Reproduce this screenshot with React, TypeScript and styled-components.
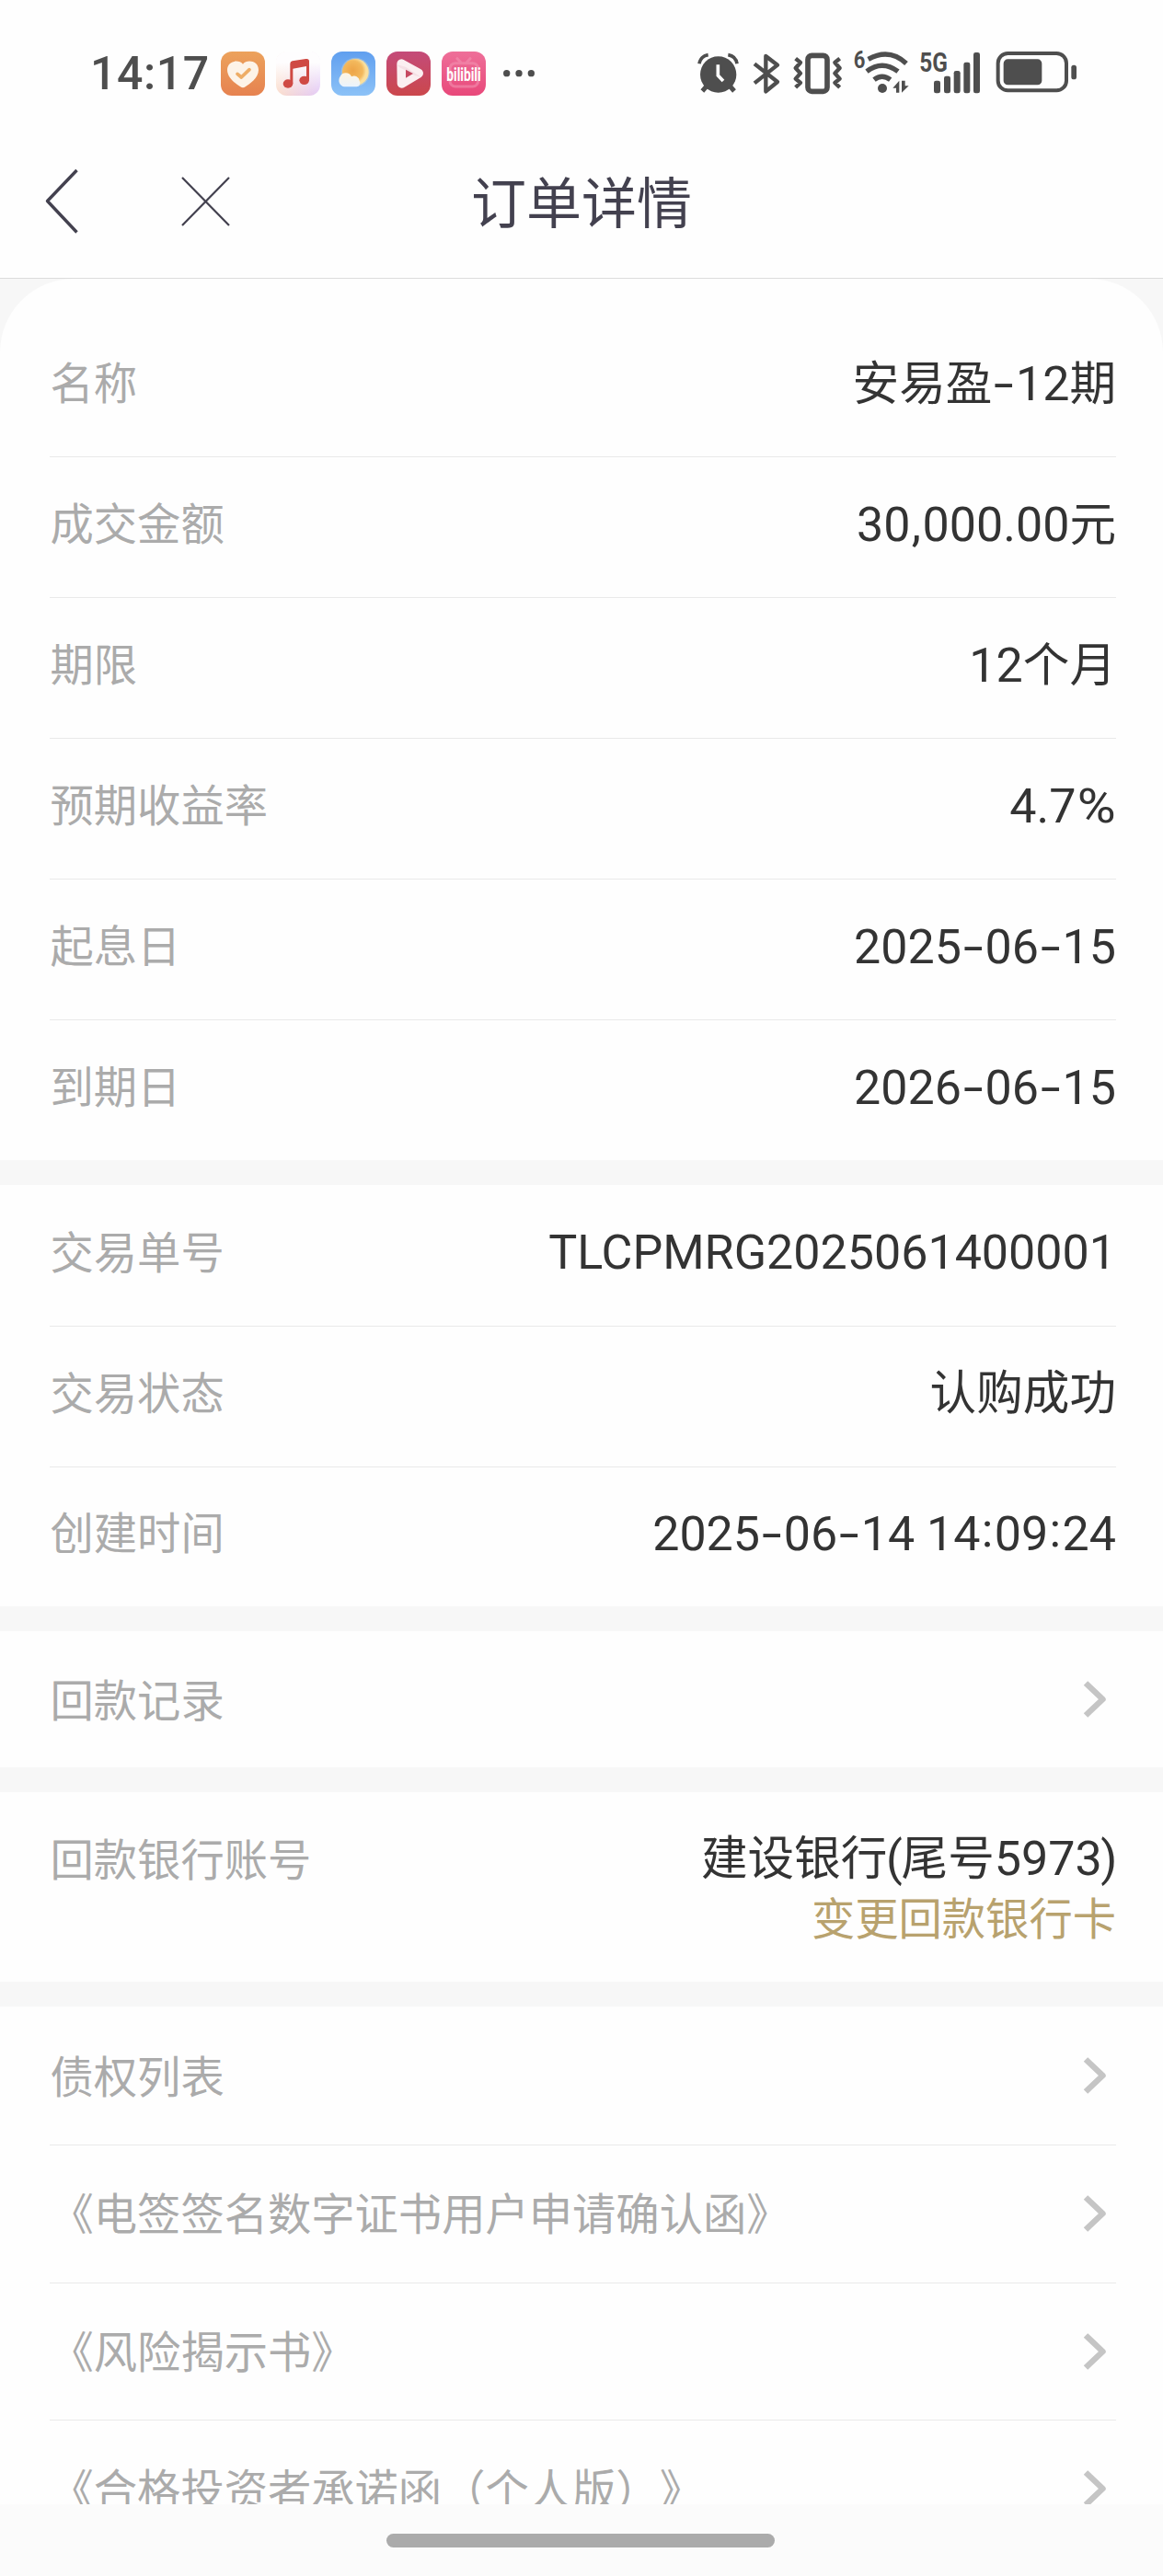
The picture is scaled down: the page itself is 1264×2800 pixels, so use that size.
import React from 'react';
import styled, { createGlobalStyle } from 'styled-components';

const INK = '#4e4e4e';
const cjk = '"Noto Sans CJK SC", "Noto Sans", sans-serif';

const GlobalStyle = createGlobalStyle`
  * { box-sizing: border-box; }
  body { margin: 0; background: #fefefe; font-family: ${cjk}; text-spacing-trim: space-all; }
  svg { display: block; overflow: visible; }
`;

const Screen = styled.div`
  width: 1264px;
  height: 2800px;
  display: flex;
  flex-direction: column;
  overflow: hidden;
  background: #f7f7f7;
`;

/* ---------- status bar ---------- */

const StatusBar = styled.div`
  flex: none;
  height: 136px;
  padding: 24px 92px 0 98px;
  display: flex;
  align-items: center;
  background: #fefefe;
`;

const Clock = styled.span`
  width: 142px;
  font: 500 50px/56px Roboto, sans-serif;
  letter-spacing: 0.6px;
  color: ${INK};
`;

const AppIcons = styled.div`
  display: flex;
  gap: 12px;
  flex: 1;
`;

const Glyph = styled.svg<{ $gap?: number }>`
  flex: none;
  height: 48px;
  margin-left: ${(p) => p.$gap ?? 0}px;
`;

const AppTile = ({ children }: { children: React.ReactNode }) => (
  <Glyph width="48" viewBox="0 0 144 144">{children}</Glyph>
);

function NotificationIcons() {
  return (
    <AppIcons>
      <AppTile>
        <defs>
          <linearGradient id="orange" x1="0" y1="0" x2="0" y2="1">
            <stop offset="0" stopColor="#eca25c" /><stop offset="1" stopColor="#e68250" />
          </linearGradient>
        </defs>
        <rect width="144" height="144" rx="36" fill="url(#orange)" />
        <path d="M72 41C60 25 21 29 21 60C21 87 51 106 64 115Q72 121 80 115C93 106 123 87 123 60C123 29 84 25 72 41Z" fill="#fdf3e8" />
        <path d="M54 73L67 84L93 59" fill="none" stroke="#eead66" strokeWidth="11" strokeLinecap="round" strokeLinejoin="round" />
      </AppTile>
      <AppTile>
        <defs>
          <linearGradient id="musicBase" x1="0" y1="0" x2="1" y2="0">
            <stop offset="0" stopColor="#fbdcc9" /><stop offset="1" stopColor="#e2c8f6" />
          </linearGradient>
          <linearGradient id="musicFade" x1="0" y1="0" x2="0" y2="1">
            <stop offset=".25" stopColor="#fefdfe" /><stop offset="1" stopColor="#fefdfe" stopOpacity="0" />
          </linearGradient>
        </defs>
        <rect width="144" height="144" rx="36" fill="url(#musicBase)" />
        <rect x="-1" y="-1" width="146" height="146" rx="36" fill="url(#musicFade)" />
        <path d="M46 40Q46 33 53 31L97 24Q108 22 108 32V92H99V48L55 56V105H46Z" fill="#cf4a44" />
        <ellipse cx="39" cy="105" rx="16" ry="14" fill="#cf4a44" />
        <ellipse cx="92" cy="94" rx="16" ry="14" fill="#cf4a44" />
      </AppTile>
      <AppTile>
        <defs>
          <linearGradient id="sky" x1="0" y1="0" x2="0" y2="1">
            <stop offset="0" stopColor="#609fef" /><stop offset="1" stopColor="#8cc2f7" />
          </linearGradient>
          <radialGradient id="sun" cx=".4" cy=".45">
            <stop offset="0" stopColor="#eda447" /><stop offset=".75" stopColor="#f3b95d" /><stop offset="1" stopColor="#fbdf9c" />
          </radialGradient>
          <linearGradient id="cloud" x1="0" y1="0" x2="0" y2="1">
            <stop offset="0" stopColor="#fff5e2" /><stop offset="1" stopColor="#eaf3fd" />
          </linearGradient>
        </defs>
        <rect width="144" height="144" rx="36" fill="url(#sky)" />
        <circle cx="79" cy="67" r="47" fill="#fbe9b8" opacity=".3" />
        <circle cx="79" cy="67" r="43" fill="url(#sun)" />
        <path d="M43 115A21 21 0 0 1 29 82A20 20 0 0 1 66 82A17 17 0 0 1 92 96A12 12 0 0 1 82 115Z" fill="url(#cloud)" />
      </AppTile>
      <AppTile>
        <defs>
          <linearGradient id="crimson" x1="0" y1="0" x2="0" y2="1">
            <stop offset="0" stopColor="#c44b79" /><stop offset="1" stopColor="#cb474c" />
          </linearGradient>
        </defs>
        <rect width="144" height="144" rx="36" fill="url(#crimson)" />
        <path d="M49 40L105 71L50 104Z" fill="none" stroke="#fbeff1" strokeWidth="30" strokeLinejoin="round" />
        <path d="M34 43Q42 54 60 60L92 78L114 84L62 50Z" fill="#f0d3da" opacity=".55" />
        <path d="M63 59L87 72L63 86Z" fill="#c64a62" />
      </AppTile>
      <AppTile>
        <defs>
          <linearGradient id="pink" x1="0" y1="0" x2="0" y2="1">
            <stop offset="0" stopColor="#ee6f99" /><stop offset="1" stopColor="#e8487a" />
          </linearGradient>
        </defs>
        <rect width="144" height="144" rx="36" fill="url(#pink)" />
        <g fill="none" stroke="#f391b1" strokeWidth="9" strokeLinecap="round" opacity=".6">
          <rect x="27" y="38" width="92" height="76" rx="18" />
          <path d="M51 23L62 35M93 23L82 35" />
        </g>
        <text x="16" y="95" textLength="112" lengthAdjust="spacingAndGlyphs" fontFamily="Roboto, sans-serif" fontWeight="700" fontSize="60" fill="#fff">bilibili</text>
      </AppTile>
      <Glyph width="36" $gap={7} viewBox="0 0 108 144">
        <g fill={INK}><circle cx="11" cy="71" r="11" /><circle cx="51" cy="71" r="11" /><circle cx="91" cy="71" r="11" /></g>
      </Glyph>
    </AppIcons>
  );
}

function SystemIcons() {
  return (
    <>
      <Glyph width="46" viewBox="54 48 138 144">
        <circle cx="122" cy="123" r="59" fill={INK} />
        <path d="M60 88Q64 63 89 59M183 88Q179 63 154 59" fill="none" stroke={INK} strokeWidth="11" />
        <path d="M83 162L70 177M161 162L174 177" stroke={INK} strokeWidth="15" />
        <path d="M121 91V126L138 144" fill="none" stroke="#fefefe" strokeWidth="11" />
      </Glyph>
      <Glyph width="32" $gap={13} viewBox="231 48 96 144">
        <path d="M240 88L315 147L277 178V63L315 92L240 151" fill="none" stroke={INK} strokeWidth="13" strokeLinejoin="round" />
      </Glyph>
      <Glyph width="55" $gap={12} viewBox="363 48 165 144">
        <rect x="414" y="61" width="63" height="117" rx="13" fill="none" stroke={INK} strokeWidth="17" />
        <path d="M374 71L390 84L374 102L390 119L374 137L390 150L374 165M518 71L502 84L518 102L502 119L518 137L502 150L518 165" fill="none" stroke={INK} strokeWidth="13" strokeLinejoin="round" />
      </Glyph>
      <Glyph width="64" $gap={10} viewBox="558 48 192 144">
        <text x="563" y="103" fontFamily="Roboto, sans-serif" fontWeight="700" fontSize="78" textLength="38" lengthAdjust="spacingAndGlyphs" fill={INK}>6</text>
        <path d="M611 73Q680 35 735 87M606 113Q656 74 708 113M630 140Q656 119 683 140" fill="none" stroke={INK} strokeWidth="16" />
        <circle cx="657" cy="168" r="15" fill={INK} />
        <path d="M712 182V143L691 167H702V182ZM720 143V182L743 160H731V143Z" fill={INK} />
      </Glyph>
      <Glyph width="70" $gap={8} viewBox="54 48 210 144">
        <text x="58" y="114" fontFamily="Roboto, sans-serif" fontWeight="700" fontSize="87" textLength="92" lengthAdjust="spacingAndGlyphs" fill={INK}>5G</text>
        <g fill={INK}>
          <rect x="105" y="143" width="21" height="41" rx="7" />
          <rect x="138" y="128" width="21" height="56" rx="7" />
          <rect x="170" y="111" width="21" height="73" rx="7" />
          <rect x="202" y="83" width="21" height="101" rx="7" />
          <rect x="234" y="51" width="21" height="133" rx="7" />
        </g>
      </Glyph>
      <Glyph width="91" $gap={13} viewBox="303 48 273 144">
        <rect x="314" y="54" width="223" height="121" rx="32" fill="none" stroke={INK} strokeWidth="12" />
        <rect x="332" y="73" width="125" height="84" rx="14" fill={INK} />
        <rect x="553" y="92" width="17" height="47" rx="8" fill={INK} />
      </Glyph>
    </>
  );
}

/* ---------- header ---------- */

const Header = styled.header`
  flex: none;
  height: 167px;
  padding: 0 51px 0 50px;
  display: grid;
  grid-template-columns: 147px 148px 1fr 294px;
  align-items: center;
  background: #fefefe;
  border-bottom: 1px solid #dcdcdc;
`;

const Title = styled.h1`
  margin: 0 0 5px;
  text-align: center;
  font: 400 60px/80px ${cjk};
  color: #43414f;
`;

/* ---------- sections ---------- */

const Content = styled.main`
  flex: 1;
  min-height: 0;
  overflow: hidden;
  display: flex;
  flex-direction: column;
  gap: 27px;
`;

const Section = styled.section<{ $first?: boolean }>`
  flex: none;
  background: #fefefe;
  padding: ${(p) => (p.$first ? 40 : 0)}px 51px 0 54px;
  border-radius: ${(p) => (p.$first ? '80px 80px 0 0' : '0')};
`;

const Row = styled.div<{ $height: number; $raise: number }>`
  height: ${(p) => p.$height}px;
  padding: 0 0 ${(p) => p.$raise}px 0.5px;
  display: flex;
  align-items: center;
  justify-content: space-between;
  & + & { box-shadow: inset 0 1px 0 #e9e9e9; }
`;

const BankRow = styled.div`
  height: 206px;
  padding: 38px 0 0 0.5px;
  display: flex;
  justify-content: space-between;
`;

const BankInfo = styled.div`
  display: flex;
  flex-direction: column;
  align-items: flex-end;
  gap: 3px;
`;

const Label = styled.span`
  font-size: 47.3px;
  line-height: 65px;
  color: #ababab;
  white-space: nowrap;
`;

const Value = styled.span`
  margin-top: -2px;
  font-size: 50.6px;
  line-height: 64px;
  color: #333;
  white-space: nowrap;
`;

const Latin = styled.span`
  font-family: Roboto, sans-serif;
  font-size: 52px;
  line-height: 1;
  white-space: pre;
`;

const Punct = styled.span<{ $w: number; $stretch?: number; $lift?: number }>`
  display: inline-flex;
  justify-content: center;
  width: ${(p) => p.$w}px;
  transform: translateY(${(p) => -(p.$lift ?? 0)}px) scaleX(${(p) => p.$stretch ?? 1});
`;

const CardLink = styled.a`
  font-size: 47.3px;
  line-height: 64px;
  color: #b8a26e;
`;

const ChevronIcon = styled.svg`
  margin-top: 4px;
`;

const Chevron = () => (
  <ChevronIcon width="36" height="44" viewBox="0 0 36 44">
    <path d="M3 4.500L21.500 22L3 39.500" fill="none" stroke="#c5c5c5" strokeWidth="6.500" strokeLinejoin="round" />
  </ChevronIcon>
);

const PUNCT: Record<string, { w: number; stretch?: number; lift?: number }> = {
  '-': { w: 25.6, stretch: 1.5, lift: 0 },
  ',': { w: 13.2 },
  ':': { w: 15.3, lift: 4 },
  '%': { w: 43.5, stretch: 1.1 },
  '(': { w: 15.3 },
  ')': { w: 15.3 },
};

/** Sets digits and Latin letters in their own face beside the Chinese text. */
function MixedText({ text }: { text: string }) {
  return (
    <>
      {text.split(/([\x20-\x7e]+)/).filter(Boolean).map((run, i) =>
        /^[\x20-\x7e]/.test(run) ? (
          <Latin key={i}>
            {run.split(/([-,:%()])/).map((part, j) => {
              const p = PUNCT[part];
              return p ? <Punct key={j} $w={p.w} $stretch={p.stretch} $lift={p.lift}>{part}</Punct> : part;
            })}
          </Latin>
        ) : (
          run
        ),
      )}
    </>
  );
}

const HomeBar = styled.footer`
  flex: none;
  height: 78px;
  padding: 32px 2px 0 0;
  background: #fbfbfb;
  display: flex;
  justify-content: center;
`;

const HomeIndicator = styled.div`
  width: 422px;
  height: 15px;
  border-radius: 8px;
  background: #ababab;
`;

const product = [
  ['名称', '安易盈-12期'],
  ['成交金额', '30,000.00元'],
  ['期限', '12个月'],
  ['预期收益率', '4.7%'],
  ['起息日', '2025-06-15'],
  ['到期日', '2026-06-15'],
];

const trade = [
  ['交易单号', 'TLCPMRG2025061400001'],
  ['交易状态', '认购成功'],
  ['创建时间', '2025-06-14 14:09:24'],
];

const documents = ['债权列表', '《电签签名数字证书用户申请确认函》', '《风险揭示书》', '《合格投资者承诺函（个人版）》'];

const Fields = ({ items, height }: { items: string[][]; height: number }) => (
  <>
    {items.map(([label, value]) => (
      <Row key={label} $height={height} $raise={12}>
        <Label>{label}</Label>
        <Value><MixedText text={value} /></Value>
      </Row>
    ))}
  </>
);

const LinkRow = ({ label, height }: { label: string; height: number }) => (
  <Row $height={height} $raise={4}>
    <Label>{label}</Label>
    <Chevron />
  </Row>
);

export default function App() {
  return (
    <Screen>
      <GlobalStyle />
      <StatusBar>
        <Clock>14:17</Clock>
        <NotificationIcons />
        <SystemIcons />
      </StatusBar>
      <Header>
        <svg width="36" height="70" viewBox="0 0 36 70">
          <path d="M33.500 1L1.500 34.500L33.500 68.500" fill="none" stroke="#43414f" strokeWidth="3.400" strokeLinejoin="round" />
        </svg>
        <svg width="53" height="54" viewBox="0 0 53 54">
          <path d="M1 1L52 53M52 1L1 53" fill="none" stroke="#43414f" strokeWidth="2.200" />
        </svg>
        <Title>订单详情</Title>
      </Header>
      <Content>
        <Section $first><Fields items={product} height={153} /></Section>
        <Section><Fields items={trade} height={152.8} /></Section>
        <Section><LinkRow label="回款记录" height={148} /></Section>
        <Section>
          <BankRow>
            <Label>回款银行账号</Label>
            <BankInfo>
              <Value><MixedText text="建设银行(尾号5973)" /></Value>
              <CardLink>变更回款银行卡</CardLink>
            </BankInfo>
          </BankRow>
        </Section>
        <Section>
          {documents.map((name) => <LinkRow key={name} label={name} height={149.7} />)}
        </Section>
      </Content>
      <HomeBar><HomeIndicator /></HomeBar>
    </Screen>
  );
}
